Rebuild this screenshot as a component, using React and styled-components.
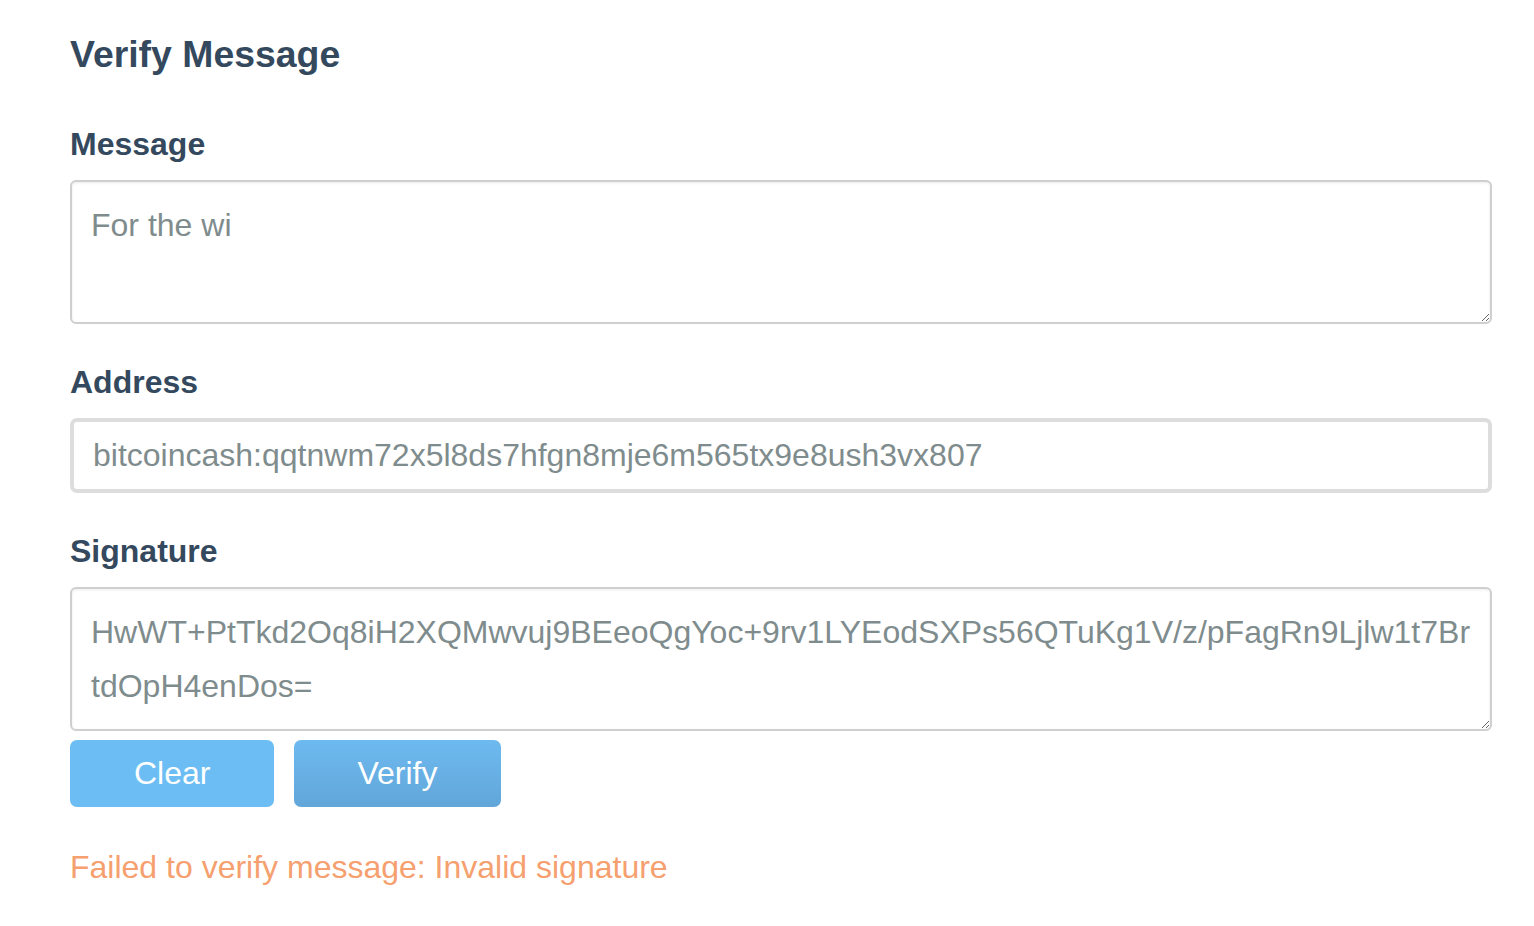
import React from "react";
import styled, { createGlobalStyle } from "styled-components";

const GlobalStyle = createGlobalStyle`
  html, body {
    margin: 0;
    padding: 0;
    background: #ffffff;
  }
  body {
    font-family: "Liberation Sans", Arial, Helvetica, sans-serif;
  }
  * { box-sizing: border-box; }
`;

const Page = styled.main`
  padding: 33px 42px 40px 70px;
  display: flex;
  flex-direction: column;
`;

const Title = styled.h1`
  margin: 0 0 50px;
  font-size: 37.4px;
  line-height: 42.5px;
  font-weight: 700;
  color: #34495e;
`;

const Field = styled.div`
  display: flex;
  flex-direction: column;
  margin-bottom: ${(p) => p.$gap ?? 40}px;
`;

const Label = styled.label`
  font-size: 32px;
  line-height: 37px;
  font-weight: 700;
  color: #34495e;
  margin-bottom: 17px;
`;

const TextArea = styled.textarea`
  display: block;
  width: 100%;
  height: 144px;
  margin: 0;
  padding: 16px 19px;
  font-family: "Liberation Sans", Arial, Helvetica, sans-serif;
  font-size: 32px;
  line-height: 54px;
  color: #7f8c8d;
  background: #fff;
  border: 2px solid #cfcfcf;
  border-radius: 6px;
  box-shadow: inset 0 1px 3px rgba(0, 0, 0, 0.08);
  outline: none;
  resize: vertical;
  overflow: hidden;
`;

const Input = styled.input`
  display: block;
  width: 100%;
  height: 75px;
  margin: 0;
  padding: 0 19px;
  font-family: "Liberation Sans", Arial, Helvetica, sans-serif;
  font-size: 32px;
  color: #7f8c8d;
  background: #fff;
  border: 4px solid #dddddd;
  border-radius: 7px;
  outline: none;
`;

const Actions = styled.div`
  display: flex;
  gap: 20px;
  margin-top: 9px;
  margin-bottom: 42px;
`;

const Button = styled.button`
  height: 67px;
  padding: 0 ${(p) => (p.$primary ? 63 : 64)}px;
  border: none;
  border-radius: 7px;
  font-family: "Liberation Sans", Arial, Helvetica, sans-serif;
  font-size: 32px;
  color: #ffffff;
  cursor: pointer;
  background: ${(p) =>
    p.$primary
      ? "linear-gradient(to bottom, #6dbaf0 0%, #62a6d9 100%)"
      : "#6cbdf3"};
`;

const ErrorText = styled.p`
  margin: 0;
  font-size: 32px;
  line-height: 37px;
  color: #f5a06e;
`;

export default function App() {
  return (
    <>
      <GlobalStyle />
      <Page>
        <Title>Verify Message</Title>
        <Field>
          <Label>Message</Label>
          <TextArea defaultValue="For the wi" spellCheck={false} />
        </Field>
        <Field>
          <Label>Address</Label>
          <Input
            defaultValue="bitcoincash:qqtnwm72x5l8ds7hfgn8mje6m565tx9e8ush3vx807"
            spellCheck={false}
          />
        </Field>
        <Field $gap={0}>
          <Label>Signature</Label>
          <TextArea
            defaultValue="HwWT+PtTkd2Oq8iH2XQMwvuj9BEeoQgYoc+9rv1LYEodSXPs56QTuKg1V/z/pFagRn9Ljlw1t7BrtdOpH4enDos="
            spellCheck={false}
          />
        </Field>
        <Actions>
          <Button type="button">Clear</Button>
          <Button type="button" $primary>
            Verify
          </Button>
        </Actions>
        <ErrorText>Failed to verify message: Invalid signature</ErrorText>
      </Page>
    </>
  );
}
